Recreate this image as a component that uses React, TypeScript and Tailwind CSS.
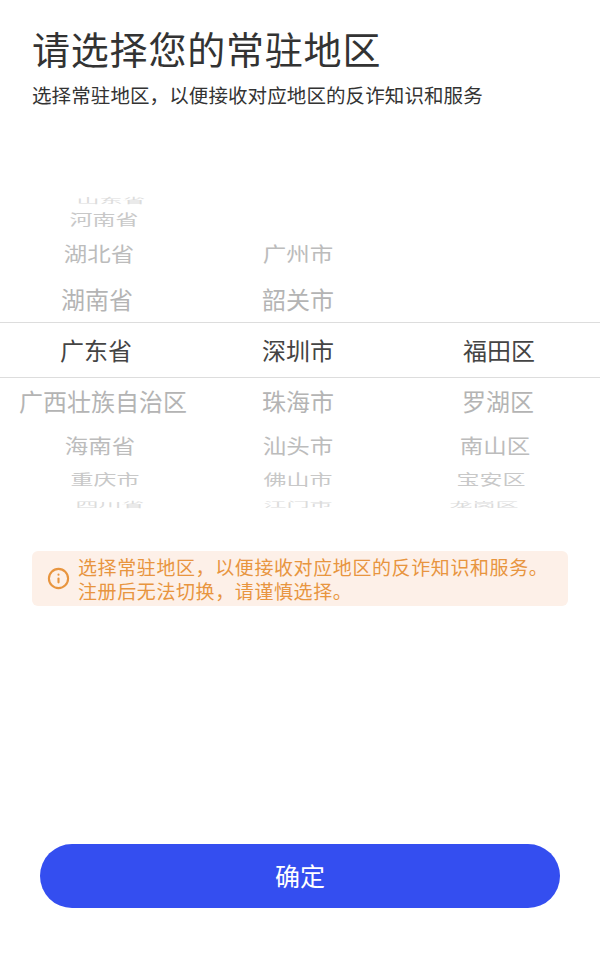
import { Info } from "lucide-react";

const CJK = "font-['Noto_Sans_CJK_SC','Noto_Sans',sans-serif]";

// wheel rows, top to bottom: height, squash and colour shrink away from the selected row
const ROWS = [
  {
    row: "h-[17px] pb-[3px] text-[#dcdcdc] text-[23px]",
    squash: "scale-y-[0.3]",
    cells: [
      { text: "山东省", shift: "translate-x-[11px]" },
      { text: "", shift: "" },
      { text: "", shift: "" },
    ],
  },
  {
    row: "h-[27px] text-[#c8c8c8] text-[23px]",
    squash: "scale-y-[0.62]",
    cells: [
      { text: "河南省", shift: "translate-x-[4px]" },
      { text: "", shift: "" },
      { text: "", shift: "" },
    ],
  },
  {
    row: "h-[42px] text-[#bcbcbc] text-[23.5px]",
    squash: "scale-y-[0.85]",
    cells: [
      { text: "湖北省", shift: "translate-x-[-1px]" },
      { text: "广州市", shift: "translate-x-[-2px]" },
      { text: "", shift: "" },
    ],
  },
  {
    row: "h-[47px] text-[#b4b4b4] text-[24px]",
    squash: "scale-y-[0.98]",
    cells: [
      { text: "湖南省", shift: "translate-x-[-3px]" },
      { text: "韶关市", shift: "translate-x-[-2px]" },
      { text: "", shift: "" },
    ],
  },
  {
    row: "h-[56px] text-[#444444] text-[24px] border-y border-[#dddddd]",
    squash: "",
    cells: [
      { text: "广东省", shift: "translate-x-[-4px]" },
      { text: "深圳市", shift: "translate-x-[-2px]" },
      { text: "福田区", shift: "translate-x-[-1px]" },
    ],
  },
  {
    row: "h-[48px] pb-[3px] text-[#b4b4b4] text-[24px]",
    squash: "scale-y-[0.98]",
    cells: [
      { text: "广西壮族自治区", shift: "translate-x-[3px]" },
      { text: "珠海市", shift: "translate-x-[-2px]" },
      { text: "罗湖区", shift: "translate-x-[-2px]" },
    ],
  },
  {
    row: "h-[42px] pb-[2px] text-[#bcbcbc] text-[23.5px]",
    squash: "scale-y-[0.85]",
    cells: [
      { text: "海南省", shift: "" },
      { text: "汕头市", shift: "translate-x-[-2px]" },
      { text: "南山区", shift: "translate-x-[-5px]" },
    ],
  },
  {
    row: "h-[25px] pb-[2px] text-[#c8c8c8] text-[23px]",
    squash: "scale-y-[0.62]",
    cells: [
      { text: "重庆市", shift: "translate-x-[5px]" },
      { text: "佛山市", shift: "translate-x-[-2px]" },
      { text: "宝安区", shift: "translate-x-[-9px]" },
    ],
  },
  {
    row: "h-[14px] text-[#dcdcdc] text-[23px]",
    squash: "scale-y-[0.3]",
    cells: [
      { text: "四川省", shift: "translate-x-[10px]" },
      { text: "江门市", shift: "translate-x-[-2px]" },
      { text: "龙岗区", shift: "translate-x-[-16px]" },
    ],
  },
];

export default function App() {
  return (
    <div className={`${CJK} h-[955px] w-[600px] flex flex-col bg-white`}>
      {/* HEADER */}
      <header className="pt-[24px] pl-[32px]">
        <h1 className="text-[38px] leading-[48px] font-normal tracking-[0.8px] text-[#333333]">
          请选择您的常驻地区
        </h1>
        <p className="mt-[9px] text-[19.5px] leading-[28px] tracking-[0.1px] text-[#333333]">
          选择常驻地区，以便接收对应地区的反诈知识和服务
        </p>
      </header>

      {/* WHEEL PICKER */}
      <div className="mt-[80px]">
        {ROWS.map((r, i) => (
          <div key={i} className={`grid grid-cols-3 items-center ${r.row}`}>
            {r.cells.map((c, j) => (
              <div
                key={j}
                className={`text-center leading-none whitespace-nowrap ${r.squash} ${c.shift}`}
              >
                {c.text}
              </div>
            ))}
          </div>
        ))}
      </div>

      {/* NOTICE */}
      <div className="mt-[44px] mx-[32px] h-[55px] rounded-[6px] bg-[#fdf0e8] flex items-center pl-[15px] gap-[8px] text-[#e8953f]">
        <Info size={23} strokeWidth={2.2} className="shrink-0" />
        <p className="text-[19px] leading-[24px] tracking-[0.6px] whitespace-nowrap">
          选择常驻地区，以便接收对应地区的反诈知识和服务。
          <br />
          注册后无法切换，请谨慎选择。
        </p>
      </div>

      {/* CONFIRM */}
      <div className="mt-auto mb-[47px] px-[40px]">
        <button className="w-full h-[64px] rounded-full bg-[#344ef0] text-white text-[25px]">
          确定
        </button>
      </div>
    </div>
  );
}
